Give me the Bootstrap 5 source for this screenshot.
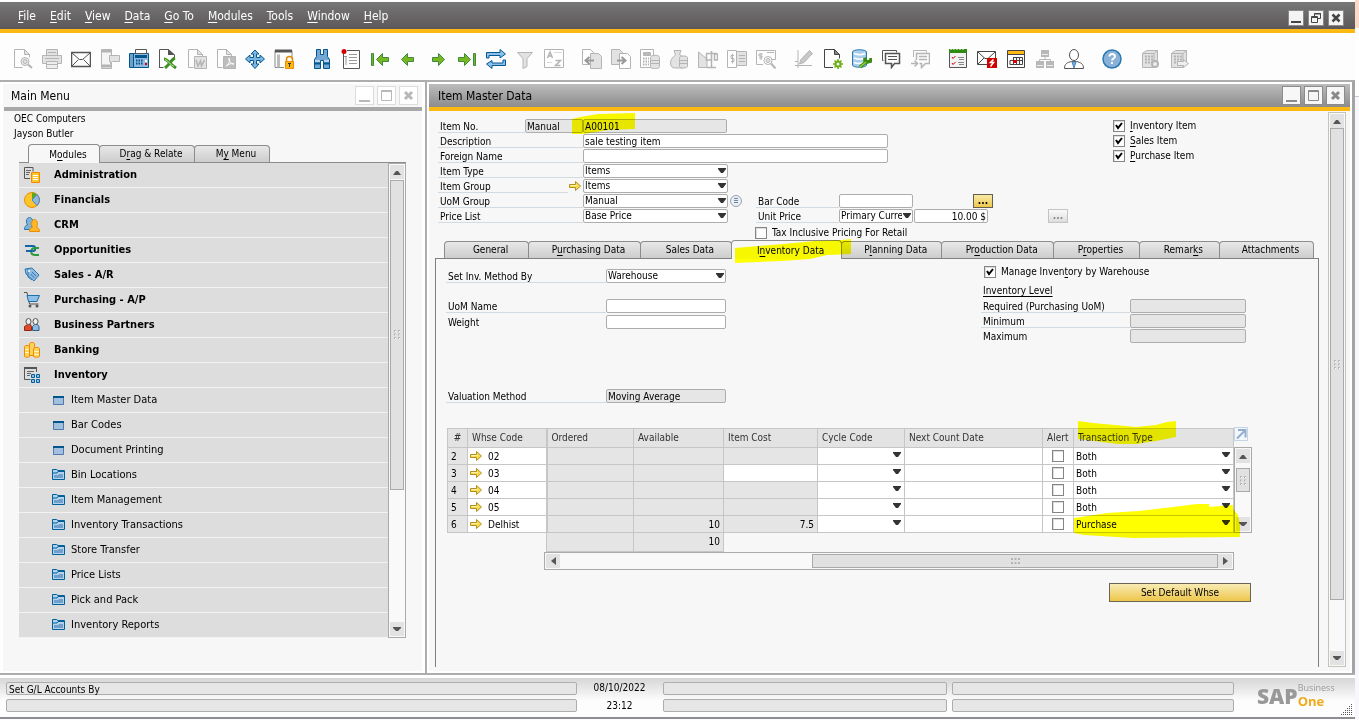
<!DOCTYPE html>
<html lang="en">
<head>
<meta charset="utf-8">
<meta name="viewport" content="width=device-width, initial-scale=1">
<title>SAP Business One - Item Master Data</title>
<link href="https://cdn.jsdelivr.net/npm/bootstrap@5.3.0/dist/css/bootstrap.min.css" rel="stylesheet">
<style>
body{font-family:"DejaVu Sans Condensed","DejaVu Sans",sans-serif;font-size:10px;line-height:14px;color:#000;background:#f8f8fc;min-height:100vh}
button{font:inherit;padding:0}
u{text-underline-offset:2px}
svg{display:block;flex:none}
.g *{stroke:#b4b4b4}
.g{fill:#e2e2e2}

/* application frame */
.app{min-width:0;background:#fdfdfd;border-top:2px solid #fff}
.desk-edge{flex:none;width:4px;background:linear-gradient(#fcd8c8 28px,#fff 28px,#fff 96px,#c8c8d4 96px,#c8c8d4 97px,#f8f8fc 97px)}
.menubar{height:31px;background:linear-gradient(#777,#5c575a);background-size:100% 27px;border-bottom:4px solid #fdb913;font-size:12px;gap:14px;padding:0 11px 0 18px}
.menubar a{color:#fff;text-decoration:none}
.winbtn{width:16px;height:16px;border:1px solid #8a8a8a;background:#f4f4f4;display:flex;align-items:center;justify-content:center}
.toolbar{height:47px;padding:4px 13px 0;gap:18px}
.toolset{gap:9px}
.toolset button{width:20px;height:20px;border:0;background:none}
.mdi{border-top:2px solid #adadad;border-right:3px solid #a4a4a4;padding-left:1px}

/* inner windows */
.pane{background:#f7f7f7;border:2px solid #fff}
.pane-menu{flex:0 0 424px;border-right:3px solid #fff}
.pane-item{min-width:0}
.gutter{flex:none;width:2px;background:#adadad}
.pane-head{height:27px;font-size:12px;border-bottom:4px solid #a8a8a8;padding-left:7px;margin-left:1px;gap:3px}
.pane-item .pane-head{background:linear-gradient(#bcbcbc,#8c8c8c);background-size:100% 23px;border-bottom-color:#fdb913;margin-left:0;padding-left:9px;padding-right:5px}
.ctl{width:19px;height:19px;border:1px solid #8c8c8c;background:#f7f7f7;color:#8a8a8a;display:flex;align-items:center;justify-content:center}
.pane-menu .ctl{border-color:#dcdcdc;color:#b8b8b8;background:#fff}
.company{padding:0 0 3px 11px;line-height:15px}

/* tabs */
.tabstrip{align-items:flex-end;position:relative}
.tabstrip button{height:17px;border:1px solid #8c8c8c;border-bottom:0;border-radius:4px 4px 0 0;background:linear-gradient(#e8e8e8,#cdcdcd);padding-left:8px;margin-right:-1px;white-space:nowrap;margin-bottom:1px;line-height:16px}
.tabstrip button.active{height:19px;background:#f7f7f7;margin-bottom:0;line-height:20px;position:relative}
.mod-tabs{margin-left:25px;height:19px;z-index:1}
.mod-tabs button:nth-child(1){width:72px}
.mod-tabs button:nth-child(2){width:96px}
.mod-tabs button:nth-child(3){width:76px}
.item-tabs{margin:1px 6px -1px 9px;height:19px;z-index:1}
.item-tabs button:nth-child(1){flex:83 1 0}
.item-tabs button:nth-child(2){flex:113 1 0}
.item-tabs button:nth-child(3){flex:91 1 0}
.item-tabs button:nth-child(4){flex:111 1 0}
.item-tabs button:nth-child(5){flex:101 1 0}
.item-tabs button:nth-child(6){flex:113 1 0}
.item-tabs button:nth-child(7){flex:85 1 0}
.item-tabs button:nth-child(8){flex:78 1 0}
.item-tabs button:nth-child(9){flex:94 1 0}

/* module list */
.modlist{border-top:1px solid #8c8c8c;margin:-1px 16px 0 16px}
.modrows a{display:flex;align-items:center;height:25px;background:#ddd;border-bottom:1px solid #f2f2f2;color:#000;text-decoration:none;font-size:11px}
.modrows a.mod{font-weight:bold;padding-left:5px;gap:14px}
.modrows a.entry{padding-left:33px;gap:6px}
.modrows svg{margin-top:-1px}

/* scroll bars */
.sbar{border:1px solid #aaa;background:#f9f9f9;width:18px;display:flex;flex-direction:column;padding:1px;flex:none}
.sbar button{width:14px;height:14px;border:0;background:#e2e2e2;display:flex;align-items:center;justify-content:center;flex:none}
.sbar .grip{border:1px solid #aaa;background:#e1e1e1;display:flex;align-items:center;justify-content:center;min-height:0;min-width:0}
.sbar-h{flex-direction:row;width:auto;height:18px}
.modlist .grip{flex:309 1 0;margin-top:1px}
.modlist .rest{flex:133 1 0}
.win-sb{border-color:#c4c4b8;margin:1px 4px 4px 9px}
.win-sb .grip{flex:473 1 0}
.win-sb .rest{flex:51 1 0}

/* form rows */
.frow{height:14px;display:flex;margin-bottom:1px}
.frow>label{flex:none;width:145px;border-bottom:1px solid #d2dae2;padding-left:2px;white-space:nowrap;line-height:16px;height:14px}
.frow input[type=text],.frow select,.fld{height:14px;border:1px solid #adadad;border-radius:2px;background:#fff;padding:0 1px;font:inherit;line-height:12px;color:#000;flex:none;min-width:0}
.frow input[readonly],.fld{background:#e6e6e6!important}
select{appearance:none;outline:0}
.frow select,.wh select{background:#fff url("data:image/svg+xml,%3Csvg xmlns='http://www.w3.org/2000/svg' width='8' height='5'%3E%3Cpath d='M0 0h8v1L5 5H3L0 1z' fill='%23333'/%3E%3C/svg%3E") no-repeat right 1px top 3px;padding-right:10px}
.w-item{width:144px}
.w-sel{width:145px}
.w-desc{width:305px}
.w-man{width:58px}
.w-half{width:74px}
.w-inv{width:120px}
.w-lvl{width:116px}
.dots{width:20px;height:14px;border:1px solid #665f50;background:linear-gradient(#f8e9a8,#efc94c);line-height:10px;font-weight:bold;margin-left:60px}
.dots:disabled{border-color:#c4c4c4;background:linear-gradient(#fafafa,#ddd);color:#888}
input[type=checkbox]{appearance:none;width:12px;height:12px;margin:0;border:1px solid #858585;background:#fff;box-shadow:inset 1px 1px #ddd;flex:none}
input[type=checkbox]:checked{background:#fff url("data:image/svg+xml,%3Csvg xmlns='http://www.w3.org/2000/svg' width='8' height='8'%3E%3Cpath d='M1 3l2 3 4-5' fill='none' stroke='%23000' stroke-width='2'/%3E%3C/svg%3E") no-repeat center}
.tick{display:flex;align-items:center;gap:5px;white-space:nowrap}
.headform{padding:8px 0 0 3px}
.itempage{min-width:0;padding:0 0 4px 4px;margin-left:2px}
.frow>label.short{width:87px}
.frow>label.linked{width:130px}
.golink{margin:2px 2px 0 1px}
.frow>label.mid{width:83px;margin-left:14px}
.frow>label.mid.after{margin-left:28px}
.info{margin:1px 0 0 2px}
.frow>label.right{border:0;padding:0;width:206px;margin-left:auto}
.frow>label.plain{border-bottom-color:transparent}
.price{margin-left:1px}
.taxrow{margin:4px 0 0 317px;height:12px}

/* inventory data page */
.tabbody{border:1px solid #808080;border-bottom:0;padding:7px 0 0 10px}
.invleft .frow>label{width:160px}
.invleft{padding-top:3px}
.gap-above{margin-top:16px}
.weight{margin-top:2px}
.valuation{margin-top:60px}
.invtop{margin-bottom:24px}
.levels{width:265px;margin-right:72px}
.levels .frow>label{width:149px}
.lvl-tick{height:12px;margin-left:3px}
.lvl-title{text-decoration:underline;text-underline-offset:2px;padding-left:2px;margin:6px 0 1px}

/* warehouse grid */
.wh-area{margin-left:1px;margin-right:66px}
.wh{width:100%;table-layout:fixed;border-collapse:collapse}
.wh th{height:19px;font-weight:normal;background:#e3e3e3;border:1px solid #c6c6c6;padding:0 4px;color:#333;white-space:nowrap;line-height:16px;vertical-align:middle}
.wh tbody td{height:17px;border:1px solid #c6c6c6;background:#fff;padding:0 3px;line-height:15px;white-space:nowrap}
.wh tbody td.ro,.wh tfoot td.ro{background:#e5e5e5}
.wh tfoot td{padding:0}
.wh tfoot td.ro{border:1px solid #c6c6c6;height:19px;padding:0 3px}
.wh td:nth-child(3),.wh th:nth-child(3){border-left-width:2px}
.wh select{border:0;width:100%;height:14px;font:inherit;line-height:13px;padding-left:0;display:block;color:#000}
.wh td svg{margin-right:6px}
.wh td input{display:block;margin:auto}
.wh tbody td.drop{padding:0 2px}
.c1{width:20px}.c2{width:79px}.c3{width:87px}.c4{width:90px}.c5{width:94px}.c6{width:87px}.c7{width:138px}.c8{width:31px}
.lk{display:flex;align-items:center;margin-left:-1px}
.expand{margin-top:-1px}
.wh-side{width:18px}
.wh-side .sbar{height:86px;margin-top:5px}
.wh-side .sbar .grip{height:24px;margin:5px 0 auto}
.wh-h{margin:0 18px 0 97px}
.wh-h .before{flex:253 1 0}
.wh-h .grip{flex:405 1 0}
.gold{width:142px;height:19px;line-height:15px;border:1px solid #6b6654;background:linear-gradient(#f8ebb4,#edc64a);margin:13px 1px 0 auto;display:block}

/* highlighter strokes */
.marker{position:absolute;mix-blend-mode:multiply;pointer-events:none;z-index:3}
.mark-no{left:134px;top:-6px}
.mark-tab{left:3px;top:-2px}
.mark-th{left:631px;top:-7px}
.mark-td{left:627px;top:76px}

/* status bar */
.status{border-top:2px solid #adadad;padding:7px 0 5px 6px;background:linear-gradient(#fff 3px,#d6d6d6 3px,#fdfdfd 26px);border-bottom:2px solid #8e8e92;display:flex;gap:5px;margin-bottom:1px;position:relative}
.status .fieldcol{display:flex;flex-direction:column;gap:4px}
.status .fld{line-height:13px;height:13px;padding-left:2px}
.s1{flex:571 1 0}.s2{flex:285 1 0}.s3{flex:282 1 0}
.clock{width:76px;line-height:18px;margin:-3px 0}
.logo{width:94px;margin:0 4px 0 18px;color:#999;font-family:"Open Sans",sans-serif}
.logo b{font-size:21px;line-height:28px;font-weight:800}
.logo span{font-size:9px;line-height:12px}
.logo strong{font-size:13px;line-height:14px;color:#f0ab1c}
.corner{position:absolute;right:2px;bottom:1px}
</style>
</head>
<body class="d-flex">
<svg width="0" height="0" class="position-absolute" aria-hidden="true">
  <symbol id="i-arrow" viewBox="0 0 12 10"><path d="M.5 3.500h6v-3l5 4.500-5 4.500v-3h-6z" fill="#f9dc4a" stroke="#b08e24"/><path d="M1.500 4.500h6" stroke="#fff3b0"/></symbol>
  <symbol id="i-win" viewBox="0 0 13 12"><path d="M1 2h11v9H1z" fill="#a3bfde"/><path d="M1.500 2.500h10v8h-10z" fill="none" stroke="#4f7ab0"/><path d="M1 2h11v2H1z" fill="#00568c"/></symbol>
  <symbol id="i-fold" viewBox="0 0 13 12"><path d="M.5.500h4l1.500 1h6.500v9H.5z" fill="#b4d2ec" stroke="#00609c"/><path d="M.5 4h4.500l1-1.500h6.500" fill="none" stroke="#00609c"/><path d="M2 6h4l1-1h4v4H2z" fill="#6fa0cc"/></symbol>
  <symbol id="i-up" viewBox="0 0 8 5"><path d="M0 5h8L5 1H3z" fill="#555"/></symbol>
  <symbol id="i-dn" viewBox="0 0 8 5"><path d="M0 0h8v1L5 4H3L0 1z" fill="#555"/></symbol>
  <symbol id="i-lt" viewBox="0 0 5 8"><path d="M5 0v8L0 4z" fill="#555"/></symbol>
  <symbol id="i-rt" viewBox="0 0 5 8"><path d="M0 0v8l5-4z" fill="#555"/></symbol>
  <symbol id="i-grip" viewBox="0 0 6 9"><path d="M0 0h2v2H0zM4 0h2v2H4zM0 3.500h2v2H0zM4 3.500h2v2H4zM0 7h2v2H0zM4 7h2v2H4z" fill="#b4b4b4"/><path d="M1 1h1v1H1zM5 1h1v1H5zM1 4.500h1v1H1zM5 4.500h1v1H5zM1 8h1v1H1zM5 8h1v1H5z" fill="#fff"/></symbol>
  <symbol id="c-min" viewBox="0 0 13 13"><path d="M1 12h11" stroke="currentColor" stroke-width="2"/></symbol>
  <symbol id="c-max" viewBox="0 0 13 13"><path d="M1.500 1.500h10v10h-10zM1.500 2.500h10" fill="none" stroke="currentColor"/></symbol>
  <symbol id="c-cls" viewBox="0 0 13 13"><path d="M3 3l7 7M10 3l-7 7" stroke="currentColor" stroke-width="3"/></symbol>
</svg>

<div class="app flex-grow-1 d-flex flex-column">
  <nav class="menubar d-flex align-items-center" aria-label="Menu bar">
    <a href="#"><u>F</u>ile</a><a href="#"><u>E</u>dit</a><a href="#"><u>V</u>iew</a><a href="#"><u>D</u>ata</a><a href="#"><u>G</u>o To</a><a href="#"><u>M</u>odules</a><a href="#"><u>T</u>ools</a><a href="#"><u>W</u>indow</a><a href="#"><u>H</u>elp</a>
    <div class="ms-auto d-flex gap-1 mt-1">
      <button class="winbtn" aria-label="Minimize"><svg width="12" height="12"><path d="M1 10h10" stroke="#444" stroke-width="2"/></svg></button>
      <button class="winbtn" aria-label="Restore"><svg width="12" height="12" fill="none" stroke="#444"><path d="M4.500 4V1.500h6v5H8M4 2h7M1.500 4.500h6v6h-6zM1 5.500h7"/></svg></button>
      <button class="winbtn" aria-label="Close"><svg width="12" height="12"><path d="M2.500 2.500l7 7M9.500 2.500l-7 7" stroke="#444" stroke-width="2.500"/></svg></button>
    </div>
  </nav>

  <div class="toolbar d-flex align-items-center" role="toolbar" aria-label="Tools">
    <div class="toolset d-flex">
      <button aria-label="Preview"><svg class="g" width="20" height="20"><path d="M1.500.500h10l5 5v3M1.500.500v18h8" fill="none"/><path d="M11.500.500v5h5z"/><circle cx="12" cy="12.500" r="4" fill="#eee"/><circle cx="12" cy="12.500" r="2"/><path d="M15 15.500l4 3.500" stroke-width="2"/></svg></button>
      <button aria-label="Print"><svg class="g" width="20" height="20"><path d="M4.500.500h11v6h-11zM.5 6.500h19v8H.5z"/><path d="M3 9.500h14M6 3.500h8" fill="none"/><path d="M4.500 12.500h11v7h-11z" fill="#eee"/><path d="M5 15.500h10"/></svg></button>
      <button aria-label="E-mail"><svg width="20" height="20" fill="none" stroke="#555"><path d="M.5 3.500h19v14H.5z" stroke-width="1.500"/><path d="M1 4l7.500 6.500h3L19 4M1 17l6.500-6.500M19 17l-6.500-6.500"/></svg></button>
      <button aria-label="SMS"><svg class="g" width="20" height="20"><path d="M1.500.500h10v19h-10z" fill="#f4f4f4"/><path d="M2 2h9M2 17h9" stroke-width="3"/><path d="M9.500 6.500h10v6h-7l-2 2v-2h-1z"/></svg></button>
      <button aria-label="Fax"><svg width="20" height="20"><path d="M.5 4.500h4v14h-4z" fill="#6fa0cc" stroke="#00568c"/><path d="M4.500 4.500h15v14h-15z" fill="#8fb9de" stroke="#00568c"/><path d="M6.500.500h11v4h-11z" fill="#fff" stroke="#555"/><path d="M6 7.500h12" stroke="#00568c" stroke-width="3"/><path d="M7 11.500h7M7 14.500h7" stroke="#00568c" stroke-width="2" stroke-dasharray="1.500 1"/><path d="M16 14h2v2h-2z" fill="#d00"/><path d="M16 11h2v2h-2z" fill="#fff"/></svg></button>
      <button aria-label="Excel"><svg width="20" height="20"><path d="M1.500 19V.500h9l6 5.500v4M1.500 18.500h4" fill="none" stroke="#555"/><path d="M10 0v6h7z" fill="#555"/><path d="M6 10c3 0 6 5 12 9M17 9c-3 1-5 6-10 10" fill="none" stroke="#3d8f1e" stroke-width="3"/><path d="M7 10.500c3 1 5 5 9 7" fill="none" stroke="#c2e6ae"/></svg></button>
      <button aria-label="Word"><svg class="g" width="20" height="20"><path d="M1.500 18.500V.500h9l5 5.500v1M1.500 18.500h5" fill="none"/><path d="M10.500.500v5h5z"/><path d="M7.500 7.500h12v12h-12z"/><path d="M9 11l2 6 2.500-5 1 5 3-6" fill="none" stroke-width="1.500"/></svg></button>
      <button aria-label="PDF"><svg class="g" width="20" height="20"><path d="M1.500 18.500V.500h9l5 5.500v1M1.500 18.500h5" fill="none"/><path d="M10.500.500v5h5z"/><path d="M7.500 7.500h12v12h-12z" fill="#bdbdbd"/><path d="M10 17c3-2 4-5 3-8 0 4 2 6 5 6-3-1-5 0-8 2z" style="stroke:#fff" fill="none"/></svg></button>
      <button aria-label="Launch application"><svg width="20" height="20"><path d="M10 1l4 4h-2.500v3.500H15V6l4.500 4-4.500 4v-2.500h-3.500V15H14l-4 4.500L6 15h2.500v-3.500H5V14L.5 10 5 6v2.500h3.500V5H6z" fill="#7db4e0" stroke="#005a96"/></svg></button>
      <button aria-label="Lock screen"><svg width="20" height="20"><path d="M1 18.500V1.500h17v8M1 18.500h9" fill="none" stroke="#888"/><path d="M1 2h17" stroke="#555" stroke-width="3"/><path d="M4.500 5.500v13" stroke="#bbb" stroke-width="3"/><path d="M12.500 13v-2.500a3 3 0 0 1 6 0V13" fill="none" stroke="#e08a00" stroke-width="1.500"/><path d="M11.500 12.500h8v7h-8z" fill="#fdb913" stroke="#f08c00"/><path d="M14 14.500h3M15.500 14v4" stroke="#333"/></svg></button>
    </div>
    <div class="toolset d-flex">
      <button aria-label="Find"><svg width="20" height="20" fill="#74a7d4" stroke="#00568c"><path d="M4.500.500h4v5h3v-5h4v7l2 3v9h-6v-8h-3v8h-6v-9l2-3z"/><path d="M3 12h5M12 12h5" stroke="#fff"/><path d="M3 14.500h5M12 14.500h5" stroke="#00568c" stroke-width="2"/></svg></button>
      <button aria-label="Add"><svg width="20" height="20"><path d="M2.500 2v17.500h16V1.500H6" fill="none" stroke="#555"/><path d="M8 5.500h8M8 8.500h8M8 11.500h8M8 14.500h8M3 7.500h3M5 7v9" stroke="#999"/><circle cx="3" cy="2.500" r="2.500" fill="#d00000"/></svg></button>
      <button aria-label="First record"><svg width="20" height="20" fill="#76b81e" stroke="#3e8a40"><path d="M1.500 4.500h2v12h-2zM6.500 10.500l6-6v4h6v4h-6v4z"/></svg></button>
      <button aria-label="Previous record"><svg width="20" height="20" fill="#76b81e" stroke="#3e8a40"><path d="M2.500 10.500l6-6v4h6v4h-6v4z"/></svg></button>
      <button aria-label="Next record"><svg width="20" height="20" fill="#76b81e" stroke="#3e8a40"><path d="M16.500 10.500l-6-6v4h-6v4h6v4z"/></svg></button>
      <button aria-label="Last record"><svg width="20" height="20" fill="#76b81e" stroke="#3e8a40"><path d="M16.500 4.500h2v12h-2zM13.500 10.500l-6-6v4h-6v4h6v4z"/></svg></button>
      <button aria-label="Refresh"><svg width="20" height="20" fill="#8fc0e8" stroke="#005a96"><path d="M.5 9V3.500H14v-3l5.500 4.500L14 9V6.500H3V9z"/><path d="M19.500 11v5.500H6v3L.5 15 6 11.500v2.500h11v-3z"/></svg></button>
      <button aria-label="Filter"><svg class="g" width="20" height="20"><path d="M2.500 3.500h15l-5.500 6v8l-4 2V9.500z"/></svg></button>
      <button aria-label="Sort"><svg class="g" width="20" height="20"><path d="M.5.500h19v18H.5z" fill="#fff"/><path d="M3.500 9l2.500-6 2.500 6M4.500 7h3" fill="none" stroke-width="1.500"/><path d="M11.500 11.500h5l-5 5h5" fill="none" stroke-width="1.500"/><path d="M10 3.500h8M3 13.500h5" opacity=".5"/></svg></button>
    </div>
    <div class="toolset d-flex">
      <button aria-label="Base document"><svg class="g" width="20" height="20"><path d="M.5.500h8l4 4v11H.5z" fill="#fff"/><path d="M8.500 4.500h8l3 3v12h-11z"/><path d="M4 11.500h8M7.500 8l-4 3.500 4 3.500" fill="none" style="stroke:#999" stroke-width="2"/></svg></button>
      <button aria-label="Target document"><svg class="g" width="20" height="20"><path d="M.5.500h8l4 4v11H.5z"/><path d="M8.500 4.500h8l3 3v12h-11z" fill="#fff"/><path d="M6 11.500h7M10.500 8l4 3.500-4 3.500" fill="none" style="stroke:#999" stroke-width="2"/></svg></button>
      <button aria-label="Gross profit"><svg class="g" width="20" height="20"><path d="M.5.500h13v18H.5z" fill="#fff"/><path d="M3.500 3.500h7v3h-7z" fill="#bbb"/><path d="M3 9.500h6M3 12.500h6M3 15.500h6" stroke-width="2" stroke-dasharray="1.500 1"/><path d="M10.500 8.500c0-3 9-3 9 0v9c0 3-9 3-9 0zM11 11.500h8M11 14.500h8"/></svg></button>
      <button aria-label="Payment means"><svg class="g" width="20" height="20"><path d="M5 1.500h7l-1.500 4c4 2 6 5 6 9s-2 4.500-4 4.500H6c-3 0-4.500-2-4.500-5s2-6 5-8z"/><path d="M10.500 8.500c0-2 8-2 8 0v9c0 2-8 2-8 0zM11 11.500h7M11 14.500h7"/></svg></button>
      <button aria-label="Volume and weight"><svg class="g" width="20" height="20"><path d="M.5 3v15.500H9V10z"/><path d="M8 4.500h11M13.500 2v16M9 18.500h9M8.500 5v6h5M16.500 5v6h3V5z" fill="none" stroke-width="1.500"/></svg></button>
      <button aria-label="Transaction journal"><svg class="g" width="20" height="20"><path d="M.5 1.500h9v17h-9z" fill="#fff"/><path d="M9.500 2.500h10v14h-10z"/><path d="M12 6.500h6M12 9.500h6M12 12.500h6M7 6.500H4v3h3v3H4M5.500 4.500v10" fill="none"/></svg></button>
      <button aria-label="Layout designer"><svg class="g" width="20" height="20"><path d="M.5 1.500h19v9H16M.5 1.500v14H7" fill="none"/><path d="M11 3.500h7M5 4v7M6.500 5H3v2h3v2H3" fill="none"/><circle cx="12" cy="11.500" r="4" fill="#fff"/><circle cx="12" cy="11.500" r="2"/><path d="M15 14.500l4.500 5" stroke-width="2"/></svg></button>
    </div>
    <div class="toolset d-flex">
      <button aria-label="Edit form"><svg class="g" width="20" height="20"><path d="M4 1v18M1 16.500h17M1 12.500h3" fill="none"/><path d="M15.500 1.500l3 3-8.500 9-4.500 1.500 1.500-4.500z" fill="#c8c8c8"/></svg></button>
      <button aria-label="Form settings"><svg width="20" height="20"><path d="M10 18.500H1.500V.500h10l5 5v4" fill="none" stroke="#444"/><path d="M11.500.500v5h5z" fill="#888" stroke="#444"/><circle cx="15" cy="15" r="2.500" fill="none" stroke="#6cae14" stroke-width="2"/><path d="M15 10v2M15 18v2M10 15h2M18 15h2M11.500 11.500l1.500 1.500M17 17l1.500 1.500M18.500 11.500L17 13M13 17l-1.500 1.500" stroke="#6cae14" stroke-width="1.500"/></svg></button>
      <button aria-label="Query manager"><svg width="20" height="20"><path d="M.5 3c0-3 14-3 14 0v13c0 3-14 3-14 0z" fill="#a9cdec" stroke="#2a7ab4"/><path d="M2 4.500c4 1.500 8 1.500 11 0M2 9c4 1.500 8 1.500 11 0M2 13.500c4 1.500 7 1 9 0" fill="none" stroke="#fff" stroke-width="1.500"/><path d="M8 18l6-5M13 8.500v3l2 1.500 4-1V9" fill="none" stroke="#3b8a12" stroke-width="3.500"/><path d="M8 18l6-5" fill="none" stroke="#8fd43c" stroke-width="1.500"/></svg></button>
      <button aria-label="Messages"><svg width="20" height="20" fill="none" stroke="#555"><path d="M2.500 11.500h-1v-10h14v2"/><path d="M4.500 4.500h14v10h-5l-3 4v-4h-6z" stroke-width="1.500"/><path d="M7 7.500h9M7 10.500h9"/></svg></button>
      <button aria-label="Forward message"><svg class="g" width="20" height="20"><path d="M3.500 8V1.500h13v2" fill="none"/><path d="M6.500 11V4.500h13v10h-4l-4 4v-4h-2" fill="none" stroke-width="1.500"/><path d="M9 7.500h8M9 10.500h8M1 14.500h6M4.500 11.500l3 3-3 3" fill="none" stroke-width="1.500"/></svg></button>
    </div>
    <div class="toolset d-flex">
      <button aria-label="Activities"><svg width="20" height="20"><path d="M1.500 1.500h17v17h-17z" fill="#f2f2f2" stroke="#555"/><path d="M1 2h18" stroke="#2f8a12" stroke-width="4"/><path d="M3 0v1M6 0v1M9 0v1M12 0v1M15 0v1" stroke="#fff"/><path d="M4 8l1 1.500L7.500 7M4 14l1 1.500L7.500 13" fill="none" stroke="#c00"/><path d="M10 8.500h6M11 10.500h5M10 13.500h6M11 15.500h5" stroke="#888"/></svg></button>
      <button aria-label="Mail alert"><svg width="20" height="20"><path d="M.5 2.500h18v13H.5z" fill="#fff" stroke="#444"/><path d="M1 3l7 6.500h3L18 3M1 15l6-6" fill="none" stroke="#444"/><path d="M10 9h10v10H10z" fill="#d00000"/><path d="M16.500 10.500l-3 3h3l-3 4" fill="none" stroke="#fff" stroke-width="1.500"/></svg></button>
      <button aria-label="Calendar"><svg width="20" height="20"><path d="M1.500 1.500h17v17h-17z" fill="#fff" stroke="#444"/><path d="M2 3.500h16" stroke="#fdb913" stroke-width="3"/><path d="M2 5.500h16M7 8.500h9.500v7H4v-4h12.500M7.500 8v8M10.500 8v8M13.500 8v8" fill="none" stroke="#444"/><path d="M7 11h4v3H7z" fill="#d00"/></svg></button>
      <button aria-label="Org chart"><svg width="20" height="20" fill="#b8b8b8"><path d="M6 1h8v7H6zM1 12h8v7H1zM11 12h8v7h-8z"/><path d="M10 8v3M4.500 13v-2.500h11V13" fill="none" stroke="#b8b8b8"/><path d="M7 5.500h6M2 16.500h6M12 16.500h6" stroke="#eee"/></svg></button>
      <button aria-label="User"><svg width="20" height="20" fill="#fff" stroke="#555"><path d="M.5 19.500c0-5 3-6 7-7h5c4 1 7 2 7 7z"/><path d="M8 13l2 6 2-6z" fill="#7db4e0" stroke="#4a86bd"/><ellipse cx="10" cy="6" rx="4.500" ry="5.500"/></svg></button>
    </div>
    <div class="toolset d-flex">
      <button aria-label="Help"><svg width="20" height="20"><circle cx="10" cy="10" r="9" fill="#8ab2d8" stroke="#2a78b0" stroke-width="1.500"/><path d="M7.500 7.500c0-3.500 5.500-3 5.500 0 0 2-3 2-3 4M10 13v2" fill="none" stroke="#fff" stroke-width="2"/></svg></button>
    </div>
    <div class="toolset d-flex">
      <button aria-label="Server settings"><svg class="g" width="20" height="20"><path d="M2.500 4.500l4-3h11v13l-3 4h-12z"/><path d="M2.500 4.500h11.500l3.500-3M14 5v13" fill="none"/><path d="M5 7.500h8M5 10.500h8M5 13.500h7" stroke-width="2" stroke-dasharray="2 1"/><circle cx="15" cy="15" r="3" fill="#eee" stroke-width="2"/></svg></button>
      <button aria-label="Server export"><svg class="g" width="20" height="20"><path d="M2.500 4.500l4-3h11v13l-3 4h-12z"/><path d="M2.500 4.500h11.500l3.500-3M14 5v13" fill="none"/><path d="M5 7.500h8M5 10.500h8M5 13.500h4" stroke-width="2" stroke-dasharray="2 1"/><path d="M8.500 12.500h6v-2l5 4-5 4v-2h-6z" fill="#eee"/></svg></button>
    </div>
  </div>

  <main class="mdi flex-grow-1 d-flex">
    <section class="pane pane-menu d-flex flex-column" aria-label="Main Menu">
      <header class="pane-head d-flex align-items-center"><span class="me-auto">Main Menu</span>
        <button class="ctl" aria-label="Minimize"><svg width="13" height="13"><use href="#c-min"/></svg></button>
        <button class="ctl" aria-label="Maximize"><svg width="13" height="13"><use href="#c-max"/></svg></button>
        <button class="ctl me-1" aria-label="Close"><svg width="13" height="13"><use href="#c-cls"/></svg></button>
      </header>
      <div class="company">OEC Computers<br>Jayson Butler</div>
      <div class="tabstrip mod-tabs d-flex" role="tablist">
        <button role="tab" class="active">M<u>o</u>dules</button><button role="tab">D<u>r</u>ag &amp; Relate</button><button role="tab">M<u>y</u> Menu</button>
      </div>
      <div class="modlist d-flex">
        <nav class="modrows flex-grow-1" aria-label="Modules">
          <a class="mod" href="#"><svg width="16" height="16"><path d="M9 .5H.5v11H6M9 .5v4" fill="none" stroke="#555"/><path d="M2 3.500h5M2 5.500h4M2 7.500h3" stroke="#666"/><path d="M7.500 5.500h8v10h-8z" fill="#fdc52c" stroke="#f08c00"/><path d="M9 8.500h5M9 10.500h5M9 12.500h5" stroke="#fff"/></svg>Administration</a>
          <a class="mod" href="#"><svg width="16" height="16"><circle cx="8" cy="8" r="7.500" fill="#fdc52c" stroke="#f08c00"/><path d="M8 8V.5a7.500 7.500 0 0 1 5 2z" fill="#5da81c"/><path d="M8 8l5-5.500a7.500 7.500 0 0 1 0 11z" fill="#8fb9de" stroke="#4a86bd"/></svg>Financials</a>
          <a class="mod" href="#"><svg width="16" height="16"><path d="M.5 12.500c0-3 1-4 3-4.500C1 4 3 .5 5.500.5S10 4 8 8v4.500z" fill="#7fb0d8" stroke="#2a78b0"/><path d="M5.500 14.500c0-3 1-3.500 3-4-2-4-.5-8 2-8s4 4 2 8c2 .5 3 1 3 4z" fill="#fdb82c" stroke="#f08c00"/></svg>CRM</a>
          <a class="mod" href="#"><svg width="16" height="16" fill="none" stroke-width="2"><path d="M1 4h8c3 0 3 5 0 5H6" stroke="#1565a8"/><path d="M15 6h-4c-5 0-5 7 0 7h4" stroke="#2d9a3c"/><path d="M2 9h6" stroke="#1565a8"/></svg>Opportunities</a>
          <a class="mod" href="#"><svg width="16" height="16"><path d="M1 2l7-1 7 7-5 6-8-7z" fill="#8fb9de" stroke="#2a78b0"/><path d="M4 2v8l4 3" fill="none" stroke="#2a78b0"/><circle cx="5" cy="4" r="1" fill="#fff"/><path d="M8 5l4 4M6.500 7l4 4" stroke="#2a78b0"/></svg>Sales - A/R</a>
          <a class="mod" href="#"><svg width="16" height="16"><path d="M0 .5h3L5.500 12h9" fill="none" stroke="#555"/><path d="M3 3.500h12.500L13 9.500H4.500z" fill="#8fc0e8" stroke="#1f6fa8"/><circle cx="6" cy="14" r="1.500" fill="#555"/><circle cx="13" cy="14" r="1.500" fill="#555"/></svg>Purchasing - A/P</a>
          <a class="mod" href="#"><svg width="16" height="16"><path d="M.5 13.500v-4l3-2h3l1 2v4z" fill="#e04a28" stroke="#8a2a18"/><path d="M8.500 13.500v-4l2-2h3l1.500 2v4z" fill="#8fb9de" stroke="#2a5f8c"/><ellipse cx="4.500" cy="4.500" rx="2.500" ry="3" fill="#eee" stroke="#555"/><ellipse cx="11.500" cy="4.500" rx="2.500" ry="3" fill="#eee" stroke="#555"/></svg>Business Partners</a>
          <a class="mod" href="#"><svg width="16" height="16" fill="#fdd25a" stroke="#f08c00"><path d="M5.500 1.500c1-1.500 4-1.500 5 0v12h-5z"/><path d="M.5 4.500c1-1.500 4-1.500 5 0v10c-1 1-4 1-5 0zM9.500 6.500c1-1.500 5-1.500 6 0v8c-1 1-5 1-6 0z"/><path d="M1 7.500h4M1 10.500h4M10 9.500h5M10 12.500h5" stroke="#fff3c4"/></svg>Banking</a>
          <a class="mod" href="#"><svg width="16" height="16"><path d="M12.500 5V.5H.5v12h6" fill="none" stroke="#555"/><path d="M0 1h13" stroke="#555" stroke-width="2"/><path d="M3 4.500h7M3 6.500h4M3 8.500h3" stroke="#666"/><path d="M7.500 7.500h3v3h-3zM12.500 7.500h3v3h-3zM7.500 12.500h3v3h-3zM12.500 12.500h3v3h-3z" fill="#8fc0e8" stroke="#00609c"/></svg>Inventory</a>
          <a class="entry" href="#"><svg width="13" height="12"><use href="#i-win"/></svg>Item Master Data</a>
          <a class="entry" href="#"><svg width="13" height="12"><use href="#i-win"/></svg>Bar Codes</a>
          <a class="entry" href="#"><svg width="13" height="12"><use href="#i-win"/></svg>Document Printing</a>
          <a class="entry" href="#"><svg width="13" height="12"><use href="#i-fold"/></svg>Bin Locations</a>
          <a class="entry" href="#"><svg width="13" height="12"><use href="#i-fold"/></svg>Item Management</a>
          <a class="entry" href="#"><svg width="13" height="12"><use href="#i-fold"/></svg>Inventory Transactions</a>
          <a class="entry" href="#"><svg width="13" height="12"><use href="#i-fold"/></svg>Store Transfer</a>
          <a class="entry" href="#"><svg width="13" height="12"><use href="#i-fold"/></svg>Price Lists</a>
          <a class="entry" href="#"><svg width="13" height="12"><use href="#i-fold"/></svg>Pick and Pack</a>
          <a class="entry" href="#"><svg width="13" height="12"><use href="#i-fold"/></svg>Inventory Reports</a>
        </nav>
        <div class="sbar">
          <button aria-label="Scroll up"><svg width="8" height="5"><use href="#i-up"/></svg></button>
          <div class="grip"><svg width="6" height="9"><use href="#i-grip"/></svg></div><div class="rest"></div>
          <button aria-label="Scroll down"><svg width="8" height="5"><use href="#i-dn"/></svg></button>
        </div>
      </div>
    </section>
    <div class="gutter"></div>
    <section class="pane pane-item flex-grow-1 d-flex flex-column" aria-label="Item Master Data">
      <header class="pane-head d-flex align-items-center"><span class="me-auto">Item Master Data</span>
        <button class="ctl" aria-label="Minimize"><svg width="13" height="13"><use href="#c-min"/></svg></button>
        <button class="ctl" aria-label="Maximize"><svg width="13" height="13"><use href="#c-max"/></svg></button>
        <button class="ctl" aria-label="Close"><svg width="13" height="13"><use href="#c-cls"/></svg></button>
      </header>
      <div class="d-flex flex-grow-1">
        <form class="itempage flex-grow-1 d-flex flex-column" onsubmit="return false">
          <div class="headform">
            <div class="frow position-relative"><label for="itemno" class="short">Item No.</label><input type="text" class="w-man" value="Manual" readonly aria-label="Numbering series"><input type="text" id="itemno" class="w-item" value="A00101" readonly>
              <svg class="marker mark-no" width="64" height="22"><path d="M0 6L8 4 26 1 63 0v16L36 17 11 21H0z" fill="#ff0"/></svg>
              <label class="tick right"><input type="checkbox" checked><span><u>I</u>nventory Item</span></label></div>
            <div class="frow"><label for="desc">Description</label><input type="text" id="desc" class="w-desc" value="sale testing item"><label class="tick right"><input type="checkbox" checked><span><u>S</u>ales Item</span></label></div>
            <div class="frow"><label for="fname">Foreign Name</label><input type="text" id="fname" class="w-desc"><label class="tick right"><input type="checkbox" checked><span><u>P</u>urchase Item</span></label></div>
            <div class="frow"><label for="itype">Item Type</label><select id="itype" class="w-sel"><option>Items</option></select></div>
            <div class="frow"><label for="igrp" class="linked">Item Group</label><svg class="golink" width="12" height="10"><use href="#i-arrow"/></svg><select id="igrp" class="w-sel"><option>Items</option></select></div>
            <div class="frow"><label for="uom">UoM Group</label><select id="uom" class="w-sel"><option>Manual</option></select><svg class="info" width="12" height="12"><circle cx="6" cy="6" r="5.500" fill="#e8eef6" stroke="#9aa4b4"/><path d="M4 3.500h4M4 5.500h4M4 7.500h4" stroke="#7a8494"/></svg><label for="barc" class="mid">Bar Code</label><input type="text" id="barc" class="w-half"><button class="dots">...</button></div>
            <div class="frow"><label for="plist">Price List</label><select id="plist" class="w-sel"><option>Base Price</option></select><label for="uprice" class="mid after">Unit Price</label><select class="w-half" aria-label="Currency"><option>Primary Currency</option></select><input type="text" id="uprice" class="w-half text-end price" value="10.00 $"><button class="dots" disabled>...</button></div>
            <label class="tick taxrow"><input type="checkbox"><span>Tax Inclusive Pricing For Retail</span></label>
          </div>
          <div class="tabstrip item-tabs d-flex" role="tablist">
            <button role="tab">General</button><button role="tab">P<u>u</u>rchasing Data</button><button role="tab">Sales Data</button><button role="tab" class="active">I<u>n</u>ventory Data<svg class="marker mark-tab" width="117" height="25"><path d="M0 9L48 5 80 2 107 1 116 0v15L92 16 75 20 47 22 0 24z" fill="#ff0"/></svg></button><button role="tab">P<u>l</u>anning Data</button><button role="tab">Pr<u>o</u>duction Data</button><button role="tab">P<u>r</u>operties</button><button role="tab">Remar<u>k</u>s</button><button role="tab">Attachments</button>
          </div>
          <div class="tabbody flex-grow-1">
            <div class="d-flex justify-content-between invtop">
              <div class="invleft">
                <div class="frow"><label for="setinv">Set Inv. Method By</label><select id="setinv" class="w-inv"><option>Warehouse</option></select></div>
                <div class="frow gap-above"><label for="uomn">UoM Name</label><input type="text" id="uomn" class="w-inv"></div>
                <div class="frow weight"><label for="wgt" class="plain">Weight</label><input type="text" id="wgt" class="w-inv"></div>
                <div class="frow valuation"><label for="valm">Valuation Method</label><input type="text" id="valm" class="w-inv" value="Moving Average" readonly></div>
              </div>
              <div class="levels">
                <label class="tick lvl-tick"><input type="checkbox" checked><span>Manage Inven<u>t</u>ory by Warehouse</span></label>
                <div class="lvl-title">Inventory Level</div>
                <div class="frow"><label for="lreq">Required (Purchasing UoM)</label><input type="text" id="lreq" class="w-lvl" readonly></div>
                <div class="frow"><label for="lmin">Minimum</label><input type="text" id="lmin" class="w-lvl" readonly></div>
                <div class="frow"><label for="lmax" class="plain">Maximum</label><input type="text" id="lmax" class="w-lvl" readonly></div>
              </div>
            </div>
            <div class="wh-area">
              <div class="d-flex">
                <div class="flex-grow-1 position-relative">
                <table class="wh">
                  <colgroup><col class="c1"><col class="c2"><col class="c3"><col class="c4"><col class="c5"><col class="c6"><col class="c7"><col class="c8"><col></colgroup>
                  <thead><tr><th class="text-center">#</th><th>Whse Code</th><th>Ordered</th><th>Available</th><th>Item Cost</th><th>Cycle Code</th><th>Next Count Date</th><th>Alert</th><th>Transaction Type</th></tr></thead>
                  <tbody>
                    <tr><td class="ro">2</td><td><span class="lk"><svg width="12" height="10"><use href="#i-arrow"/></svg>02</span></td><td class="ro"></td><td class="ro"></td><td class="ro"></td><td class="drop"><select aria-label="Cycle code"><option></option></select></td><td></td><td><input type="checkbox" aria-label="Alert"></td><td class="drop"><select aria-label="Transaction type"><option>Both</option></select></td></tr>
                    <tr><td class="ro">3</td><td><span class="lk"><svg width="12" height="10"><use href="#i-arrow"/></svg>03</span></td><td class="ro"></td><td class="ro"></td><td></td><td class="drop"><select aria-label="Cycle code"><option></option></select></td><td></td><td><input type="checkbox" aria-label="Alert"></td><td class="drop"><select aria-label="Transaction type"><option>Both</option></select></td></tr>
                    <tr><td class="ro">4</td><td><span class="lk"><svg width="12" height="10"><use href="#i-arrow"/></svg>04</span></td><td class="ro"></td><td class="ro"></td><td class="ro"></td><td class="drop"><select aria-label="Cycle code"><option></option></select></td><td></td><td><input type="checkbox" aria-label="Alert"></td><td class="drop"><select aria-label="Transaction type"><option>Both</option></select></td></tr>
                    <tr><td class="ro">5</td><td><span class="lk"><svg width="12" height="10"><use href="#i-arrow"/></svg>05</span></td><td class="ro"></td><td class="ro"></td><td class="ro"></td><td class="drop"><select aria-label="Cycle code"><option></option></select></td><td></td><td><input type="checkbox" aria-label="Alert"></td><td class="drop"><select aria-label="Transaction type"><option>Both</option></select></td></tr>
                    <tr><td class="ro">6</td><td><span class="lk"><svg width="12" height="10"><use href="#i-arrow"/></svg>Delhist</span></td><td class="ro"></td><td class="ro text-end">10</td><td class="ro text-end">7.5</td><td class="drop"><select aria-label="Cycle code"><option></option></select></td><td></td><td><input type="checkbox" aria-label="Alert"></td><td class="drop"><select aria-label="Transaction type"><option>Purchase</option></select></td></tr>
                  </tbody>
                  <tfoot><tr><td></td><td></td><td class="ro"></td><td class="ro text-end">10</td><td colspan="5"></td></tr></tfoot>
                </table>
                <svg class="marker mark-th" width="100" height="24"><path d="M0 0l15 2 22 2 21 2 20-2 11-3 9-1v16l-20 4-20 3H40L0 18z" fill="#ff0"/></svg>
                <svg class="marker mark-td" width="168" height="35"><path d="M0 14l33-5 32-2 34-4 24-3h12v3l24-2v4l5 6 2 9v13l-107 1-49-3-10-2z" fill="#ff0"/></svg>
                </div>
                <div class="wh-side">
                  <svg class="expand" width="15" height="15"><path d="M.5.500h13v13H.5z" fill="#f4f7fa" stroke="#c4d4e4"/><path d="M4 3h7.500v7.500M11 3.500l-8 8" fill="none" stroke="#92add0" stroke-width="2"/></svg>
                  <div class="sbar"><button type="button" aria-label="Scroll up"><svg width="8" height="5"><use href="#i-up"/></svg></button><div class="grip"><svg width="6" height="9"><use href="#i-grip"/></svg></div><button type="button" aria-label="Scroll down"><svg width="8" height="5"><use href="#i-dn"/></svg></button></div>
                </div>
              </div>
              <div class="sbar sbar-h wh-h"><button type="button" aria-label="Scroll left"><svg width="5" height="8"><use href="#i-lt"/></svg></button><div class="before"></div><div class="grip"><svg width="9" height="6"><path d="M0 0h2v2H0zM3.500 0h2v2h-2zM7 0h2v2H7zM0 4h2v2H0zM3.500 4h2v2h-2zM7 4h2v2H7z" fill="#b4b4b4"/></svg></div><button type="button" aria-label="Scroll right"><svg width="5" height="8"><use href="#i-rt"/></svg></button></div>
              <button class="gold" type="button">Set Default Whse</button>
            </div>
          </div>
        </form>
        <div class="sbar win-sb"><button aria-label="Scroll up"><svg width="8" height="5"><use href="#i-up"/></svg></button><div class="grip"><svg width="6" height="9"><use href="#i-grip"/></svg></div><div class="rest"></div><button aria-label="Scroll down"><svg width="8" height="5"><use href="#i-dn"/></svg></button></div>
      </div>
    </section>
  </main>

  <footer class="status">
    <div class="fieldcol s1"><div class="fld">Set G/L Accounts By</div><div class="fld"></div></div>
    <div class="clock text-center"><div>08/10/2022</div><div>23:12</div></div>
    <div class="fieldcol s2"><div class="fld"></div><div class="fld"></div></div>
    <div class="fieldcol s3"><div class="fld"></div><div class="fld"></div></div>
    <div class="logo d-flex"><b>SAP</b><div class="d-flex flex-column"><span>Business</span><strong>One</strong></div></div>
    <svg class="corner" width="12" height="12" fill="#555"><path d="M10 0h1v1h-1zM8 2h1v1H8zM10 2h1v1h-1zM6 4h1v1H6zM8 4h1v1H8zM10 4h1v1h-1zM4 6h1v1H4zM6 6h1v1H6zM8 6h1v1H8zM10 6h1v1h-1zM2 8h1v1H2zM4 8h1v1H4zM6 8h1v1H6zM8 8h1v1H8zM10 8h1v1h-1zM0 10h1v1H0zM2 10h1v1H2zM4 10h1v1H4zM6 10h1v1H6zM8 10h1v1H8zM10 10h1v1h-1z"/></svg>
  </footer>
</div>
<div class="desk-edge"></div>
<script src="https://cdn.jsdelivr.net/npm/bootstrap@5.3.0/dist/js/bootstrap.bundle.min.js"></script>
</body>
</html>
